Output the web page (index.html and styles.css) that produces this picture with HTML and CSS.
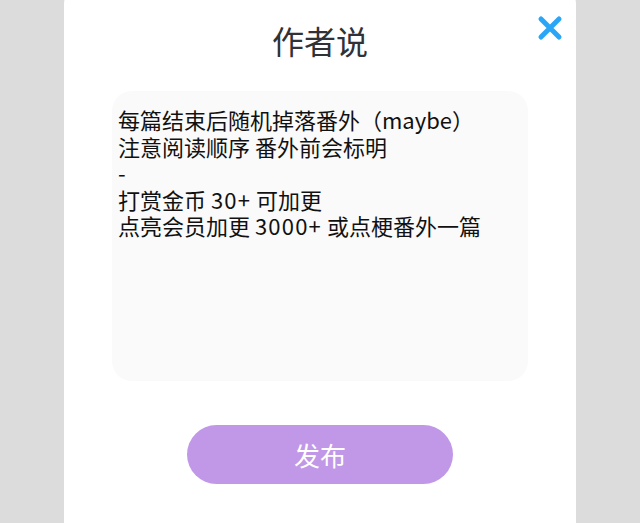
FILE: index.html
```html
<!DOCTYPE html>
<html>
<head>
    <title>作者说</title>
    <link rel="stylesheet" href="styles.css">
</head>
<body>
    <div class="modal">
        <h2 class="title">作者说</h2>
        <button class="close" type="button" aria-label="关闭">
            <svg width="26" height="26" viewBox="0 0 26 26">
                <path d="M4 4 L22 22 M22 4 L4 22" stroke="#2ba6f6" stroke-width="5" stroke-linecap="round" fill="none"/>
            </svg>
        </button>
        <div class="note">每篇结束后随机掉落番外（maybe）<br>注意阅读顺序 番外前会标明<br>-<br>打赏金币 <span class="num">30+</span> 可加更<br>点亮会员加更 <span class="num">3000+</span> 或点梗番外一篇</div>
        <button class="publish" type="button">发布</button>
    </div>
</body>
</html>
```

FILE: styles.css
```css
html, body {
    margin: 0;
    padding: 0;
    height: 100%;
}
body {
    font-family: "Noto Sans CJK SC", "Noto Sans", sans-serif;
    background-color: #dcdcdc;
    overflow: hidden;
}
.modal {
    position: relative;
    width: 512px;
    height: 560px;
    margin: -12px auto 0;
    background-color: #fff;
    border-radius: 16px;
    padding-top: 30px;
    box-sizing: border-box;
    display: flex;
    flex-direction: column;
    align-items: center;
}
.title {
    margin: 0;
    font-size: 32px;
    line-height: 44px;
    font-weight: normal;
    color: #303238;
}
.close {
    position: absolute;
    top: 27px;
    right: 13px;
    padding: 0;
    border: none;
    background: none;
    width: 26px;
    height: 26px;
    cursor: pointer;
}
.close svg {
    display: block;
}
.note {
    width: 416px;
    height: 290px;
    margin-top: 29px;
    padding: 15px 6px;
    box-sizing: border-box;
    background-color: #fafafa;
    border-radius: 20px;
    font-size: 22px;
    line-height: 26.5px;
    color: #111;
}
.num {
    letter-spacing: 1.2px;
}
.publish {
    margin-top: 44px;
    width: 266px;
    height: 59px;
    border: none;
    border-radius: 30px;
    background-color: #c197e8;
    color: #fff;
    font-family: inherit;
    font-size: 26px;
    cursor: pointer;
}
```
